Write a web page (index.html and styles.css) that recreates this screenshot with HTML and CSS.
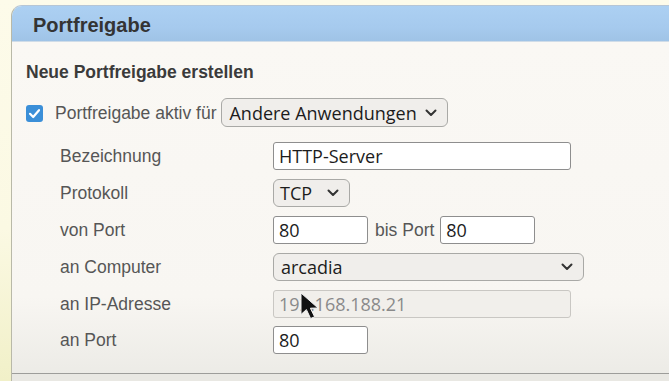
FILE: index.html
```html
<!DOCTYPE html>
<html lang="de">
<head>
<meta charset="utf-8">
<link rel="stylesheet" href="styles.css">
</head>
<body>
<div class="page">
  <div class="panel">
    <div class="panel-head">Portfreigabe</div>
    <div class="panel-body">
      <h2 class="subtitle">Neue Portfreigabe erstellen</h2>
      <div class="active-row">
        <span class="check"><svg width="17" height="17" viewBox="0 0 17 17"><rect x="0" y="0" width="17" height="17" rx="3" fill="#3b8fd8"/><path d="M4 8.8 L7.2 12 L13 5.2" fill="none" stroke="#fff" stroke-width="2.2" stroke-linecap="round" stroke-linejoin="round"/></svg></span>
        <span class="label">Portfreigabe aktiv für</span>
        <div class="select sel-app"><span>Andere Anwendungen</span><svg class="chev" width="12" height="8" viewBox="0 0 12 8"><path d="M1.5 1.5 L6 6 L10.5 1.5" fill="none" stroke="#333" stroke-width="2" stroke-linecap="round" stroke-linejoin="round"/></svg></div>
      </div>
      <div class="form">
        <div class="label">Bezeichnung</div>
        <div class="field"><input class="inp w-long" type="text" value="HTTP-Server"></div>

        <div class="label">Protokoll</div>
        <div class="field"><div class="select sel-proto"><span>TCP</span><svg class="chev" width="12" height="8" viewBox="0 0 12 8"><path d="M1.5 1.5 L6 6 L10.5 1.5" fill="none" stroke="#333" stroke-width="2" stroke-linecap="round" stroke-linejoin="round"/></svg></div></div>

        <div class="label">von Port</div>
        <div class="field"><input class="inp w-port" type="text" value="80"><span class="label bis">bis Port</span><input class="inp w-port" type="text" value="80"></div>

        <div class="label">an Computer</div>
        <div class="field"><div class="select sel-comp"><span>arcadia</span><svg class="chev" width="12" height="8" viewBox="0 0 12 8"><path d="M1.5 1.5 L6 6 L10.5 1.5" fill="none" stroke="#333" stroke-width="2" stroke-linecap="round" stroke-linejoin="round"/></svg></div></div>

        <div class="label">an IP-Adresse</div>
        <div class="field ip-field"><input class="inp w-long disabled" type="text" value="192.168.188.21" disabled>
          <svg class="cursor" width="22" height="28" viewBox="0 0 22 28"><path d="M1 1 L1 22.5 L6.4 17.6 L10.6 26.5 L14.6 24.8 L10.4 16.2 L18 16 Z" fill="#111" stroke="#f4f4f4" stroke-width="1" stroke-linejoin="round"/></svg>
        </div>

        <div class="label">an Port</div>
        <div class="field"><input class="inp w-port" type="text" value="80"></div>
      </div>
      <div class="panel-foot"></div>
    </div>
  </div>
</div>
</body>
</html>
```
FILE: styles.css
```css
html, body {
  margin: 0;
  padding: 0;
}
body {
  width: 669px;
  height: 381px;
  overflow: hidden;
  background: linear-gradient(180deg, #fdfbea 0%, #fbf9e3 60%, #f1f0c8 100%);
  font-family: "Liberation Sans", Arial, sans-serif;
}
.page {
  padding: 5px 0 0 11px;
}
.panel {
  border-left: 1px solid #b9b9a8;
  border-top: 1px solid #b6c6d6;
  border-top-left-radius: 11px;
  overflow: hidden;
  background: #f9f7f3;
  height: 376px;
  display: flex;
  flex-direction: column;
}
.panel-head {
  height: 36px;
  box-sizing: border-box;
  padding-top: 2px;
  background: linear-gradient(180deg, #acd0f2 0%, #a6caee 60%, #9fc3e6 100%);
  border-bottom: 1px solid #cfdce8;
  color: #343434;
  font-weight: bold;
  font-size: 20px;
  line-height: 34px;
  padding-left: 21px;
}
.panel-body {
  flex: 1;
  display: flex;
  flex-direction: column;
  background: linear-gradient(180deg, #faf8f4 0%, #f8f6f2 75%, #ebeae5 100%);
}
.subtitle {
  margin: 0;
  padding: 20px 0 0 14px;
  height: 20px;
  font-size: 17.5px;
  line-height: 20px;
  font-weight: bold;
  color: #3b3b3b;
}
.active-row {
  display: flex;
  align-items: center;
  margin-top: 16px;
  padding-left: 14px;
  height: 29px;
}
.check {
  width: 17px;
  height: 17px;
  display: flex;
  margin-right: 12px;
  margin-top: 2px;
}
.label {
  font-size: 17.5px;
  color: #565656;
  line-height: 20px;
}
.select {
  box-sizing: border-box;
  display: flex;
  align-items: center;
  justify-content: space-between;
  height: 29px;
  border: 1px solid #a9a9a6;
  border-radius: 6px;
  background: #f0eeeb;
  font-family: "Open Sans", "Noto Sans", sans-serif;
  font-size: 18px;
  font-weight: 500;
  color: #1c1c1c;
  padding: 0 10px 0 7px;
}
.sel-app {
  width: 227px;
  margin-left: 5px;
}
.sel-proto {
  width: 77px;
  height: 28px;
  padding-left: 6px;
}
.sel-comp {
  width: 311px;
  height: 28px;
}
.chev {
  display: block;
}
.form {
  display: grid;
  grid-template-columns: 213px 1fr;
  grid-auto-rows: 36.8px;
  padding-left: 48px;
  margin-top: 11px;
  align-items: center;
}
.field {
  display: flex;
  align-items: center;
}
.inp {
  box-sizing: border-box;
  height: 28px;
  border: 1px solid #8e8e8e;
  border-radius: 3px;
  background: #fff;
  font-family: "Open Sans", "Noto Sans", sans-serif;
  font-size: 18px;
  font-weight: 500;
  color: #1c1c1c;
  padding: 0 5px;
  margin: 0;
  outline: none;
}
.w-long {
  width: 298px;
}
.w-port {
  width: 95px;
}
.bis {
  margin: 0 6px 0 7px;
}
.disabled {
  background: #f1efeb;
  border-color: #c9c7c3;
  color: #8a8a8a;
  font-weight: 400;
}
.ip-field {
  position: relative;
}
.cursor {
  position: absolute;
  left: 27px;
  top: 2px;
}
.panel-foot {
  margin-top: auto;
  height: 8px;
  border-top: 1px solid #9d9d9a;
  background: #e9e8e3;
}
```
